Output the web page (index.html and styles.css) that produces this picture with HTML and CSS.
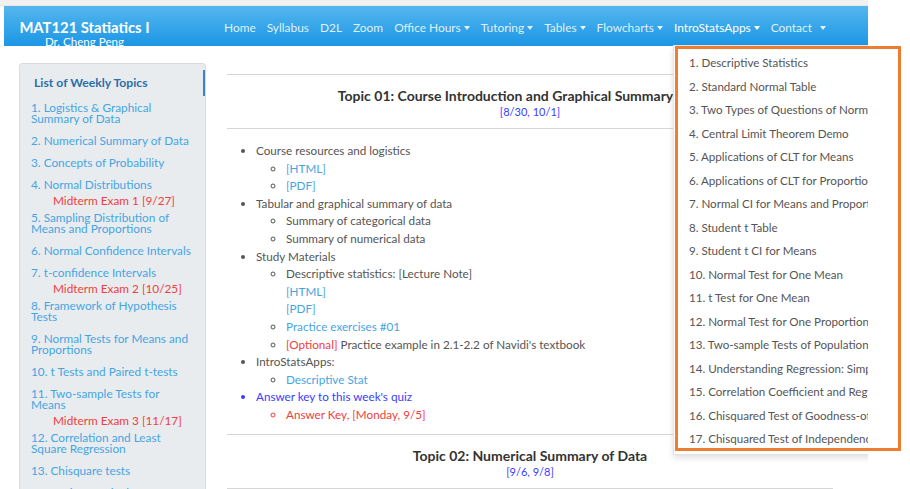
FILE: index.html
```html
<!DOCTYPE html>
<html lang="en">
<head>
<meta charset="utf-8">
<title>MAT121 Statiatics I</title>
<link rel="stylesheet" href="styles.css">
</head>
<body>
<div class="page">
  <div class="topbar"></div>
  <header class="navbar">
    <div class="brand">
      <div class="brand-title">MAT121 Statiatics I</div>
      <div class="brand-sub">Dr. Cheng Peng</div>
    </div>
    <nav class="nav">
      <a class="nav-item">Home</a>
      <a class="nav-item">Syllabus</a>
      <a class="nav-item">D2L</a>
      <a class="nav-item">Zoom</a>
      <a class="nav-item dd">Office Hours<span class="caret"></span></a>
      <a class="nav-item dd">Tutoring<span class="caret"></span></a>
      <a class="nav-item dd">Tables<span class="caret"></span></a>
      <a class="nav-item dd">Flowcharts<span class="caret"></span></a>
      <a class="nav-item dd active">IntroStatsApps<span class="caret"></span></a>
      <a class="nav-item dd">Contact<span class="caret wide"></span></a>
    </nav>
  </header>

  <div class="layout">
    <aside class="sidebar">
      <div class="side-title">List of Weekly Topics</div>
      <div class="side-list">
        <a class="topic">1. Logistics &amp; Graphical Summary of Data</a>
        <a class="topic">2. Numerical Summary of Data</a>
        <a class="topic">3. Concepts of Probability</a>
        <a class="topic">4. Normal Distributions</a>
        <div class="exam">Midterm Exam 1 [9/27]</div>
        <a class="topic">5. Sampling Distribution of Means and Proportions</a>
        <a class="topic">6. Normal Confidence Intervals</a>
        <a class="topic">7. t-confidence Intervals</a>
        <div class="exam">Midterm Exam 2 [10/25]</div>
        <a class="topic">8. Framework of Hypothesis Tests</a>
        <a class="topic">9. Normal Tests for Means and Proportions</a>
        <a class="topic">10. t Tests and Paired t-tests</a>
        <a class="topic">11. Two-sample Tests for Means</a>
        <div class="exam">Midterm Exam 3 [11/17]</div>
        <a class="topic">12. Correlation and Least Square Regression</a>
        <a class="topic">13. Chisquare tests</a>
        <a class="topic">14. Review of Final Exam</a>
      </div>
    </aside>

    <main class="content">
      <section class="topic-block">
        <div class="topic-head">
          <div class="topic-title">Topic 01: Course Introduction and Graphical Summary of Data</div>
          <div class="topic-date">[8/30, 10/1]</div>
        </div>
        <ul class="outline">
          <li>Course resources and logistics
            <ul>
              <li><a class="lnk">[HTML]</a></li>
              <li><a class="lnk">[PDF]</a></li>
            </ul>
          </li>
          <li>Tabular and graphical summary of data
            <ul>
              <li>Summary of categorical data</li>
              <li>Summary of numerical data</li>
            </ul>
          </li>
          <li>Study Materials
            <ul>
              <li>Descriptive statistics: [Lecture Note]<br><a class="lnk">[HTML]</a><br><a class="lnk">[PDF]</a></li>
              <li><a class="lnk">Practice exercises #01</a></li>
              <li><span class="red">[Optional]</span> Practice example in 2.1-2.2 of Navidi's textbook</li>
            </ul>
          </li>
          <li>IntroStatsApps:
            <ul>
              <li><a class="lnk">Descriptive Stat</a></li>
            </ul>
          </li>
          <li class="blue">Answer key to this week's quiz
            <ul>
              <li class="red">Answer Key, [Monday, 9/5]</li>
            </ul>
          </li>
        </ul>
      </section>
      <section class="topic-block">
        <div class="topic-head">
          <div class="topic-title">Topic 02: Numerical Summary of Data</div>
          <div class="topic-date">[9/6, 9/8]</div>
        </div>
      </section>
    </main>
  </div>

  <div class="dropdown">
    <a class="dd-item">1. Descriptive Statistics</a>
    <a class="dd-item">2. Standard Normal Table</a>
    <a class="dd-item">3. Two Types of Questions of Normal Distributions</a>
    <a class="dd-item">4. Central Limit Theorem Demo</a>
    <a class="dd-item">5. Applications of CLT for Means</a>
    <a class="dd-item">6. Applications of CLT for Proportions</a>
    <a class="dd-item">7. Normal CI for Means and Proportions</a>
    <a class="dd-item">8. Student t Table</a>
    <a class="dd-item">9. Student t CI for Means</a>
    <a class="dd-item">10. Normal Test for One Mean</a>
    <a class="dd-item">11. t Test for One Mean</a>
    <a class="dd-item">12. Normal Test for One Proportion</a>
    <a class="dd-item">13. Two-sample Tests of Population Means</a>
    <a class="dd-item">14. Understanding Regression: Simple Linear</a>
    <a class="dd-item">15. Correlation Coefficient and Regression</a>
    <a class="dd-item">16. Chisquared Test of Goodness-of-fit</a>
    <a class="dd-item">17. Chisquared Test of Independence</a>
  </div>
</div>
<div class="annotation"></div>
</body>
</html>
```

FILE: styles.css
```css
* { box-sizing: border-box; }

html, body {
  margin: 0;
  padding: 0;
  background: #ffffff;
}

body {
  font-family: "Lato", "Open Sans", sans-serif;
  font-size: 11.7px;
  color: #555555;
  position: relative;
  width: 910px;
  height: 489px;
  overflow: hidden;
}

a { text-decoration: none; cursor: pointer; }

.page {
  position: relative;
  width: 868px;
  height: 489px;
  overflow: hidden;
  background: #ffffff;
}

.topbar {
  height: 6px;
  background: #f1f1f1;
  border-bottom: 1px solid #e6e6e6;
}

.navbar {
  margin-left: 4px;
  height: 40px;
  background: linear-gradient(to bottom, #55b6ec 0%, #3aa8ea 45%, #1c96e5 100%);
  display: flex;
  align-items: stretch;
  padding-left: 15px;
}

.brand {
  width: 205px;
  display: flex;
  flex-direction: column;
  align-items: flex-start;
}

.brand-title {
  width: 131px;
  text-align: center;
  color: #ffffff;
  font-weight: 700;
  font-size: 14.8px;
  line-height: 18px;
  margin-top: 12px;
  white-space: nowrap;
}

.brand-sub {
  width: 131px;
  text-align: center;
  color: #ffffff;
  font-size: 11.6px;
  line-height: 12px;
  white-space: nowrap;
}

.nav {
  display: flex;
  align-items: center;
  gap: 11px;
  padding-top: 2px;
}

.nav-item {
  color: rgba(255, 255, 255, 0.86);
  font-size: 11.9px;
  white-space: nowrap;
  display: flex;
  align-items: center;
}

.nav-item.active { color: #ffffff; }

.caret {
  display: inline-block;
  width: 0;
  height: 0;
  margin-left: 3px;
  border-left: 3px solid transparent;
  border-right: 3px solid transparent;
  border-top: 4px solid currentColor;
  margin-top: 1px;
}

.caret.wide { margin-left: 8px; }

.layout {
  display: flex;
  align-items: flex-start;
}

.sidebar {
  margin-left: 19px;
  margin-top: 17px;
  width: 187px;
  height: 460px;
  background: #e9ecef;
  border: 1px solid #d9dcdf;
  border-radius: 3px;
  padding-top: 6px;
  flex: none;
  font-size: 11.8px;
}

.side-title {
  height: 26px;
  line-height: 26px;
  padding-left: 14px;
  font-weight: 700;
  font-size: 12.2px;
  color: #2c6ea8;
  border-right: 2px solid #3b82c4;
}

.side-list {
  padding-left: 11px;
  padding-right: 13px;
}

.topic {
  display: block;
  color: #45a5e3;
  line-height: 11px;
  padding: 5.5px 0;
}

.exam {
  color: #f03d3d;
  line-height: 11px;
  padding-left: 22px;
  white-space: nowrap;
}

.content {
  margin-left: 21px;
  margin-top: 28px;
  width: 606px;
  flex: none;
}

.topic-block {
  border-top: 1px solid #d6d6d6;
}

.topic-head {
  text-align: center;
  padding: 13px 0 8px;
  border-bottom: 1px solid #d6d6d6;
}

.topic-title {
  font-weight: 700;
  color: #333333;
  font-size: 14px;
  line-height: 16px;
  white-space: nowrap;
}

.topic-date {
  color: #3b3bff;
  font-size: 11px;
  line-height: 16px;
}

.outline {
  margin: 13px 0 10px;
  padding-left: 29px;
  line-height: 17.6px;
  list-style: disc;
}

.outline ul {
  margin: 0;
  padding-left: 30px;
  list-style: circle;
}

.lnk { color: #45a5e3; }
.red { color: #f23c3c; }
.blue { color: #3b3bff; }

.dropdown {
  position: absolute;
  left: 673px;
  top: 45px;
  width: 200px;
  height: 410px;
  background: #ffffff;
  border: 1px solid #e3e3e3;
  box-shadow: 0 3px 6px rgba(0, 0, 0, 0.12);
  padding-top: 5px;
  font-size: 11.6px;
}

.dd-item {
  display: block;
  padding-left: 15px;
  line-height: 23.5px;
  color: #555555;
  white-space: nowrap;
  overflow: hidden;
}

.annotation {
  position: absolute;
  left: 675px;
  top: 46px;
  width: 226px;
  height: 405px;
  border: 3px solid #ed7d31;
}
```
